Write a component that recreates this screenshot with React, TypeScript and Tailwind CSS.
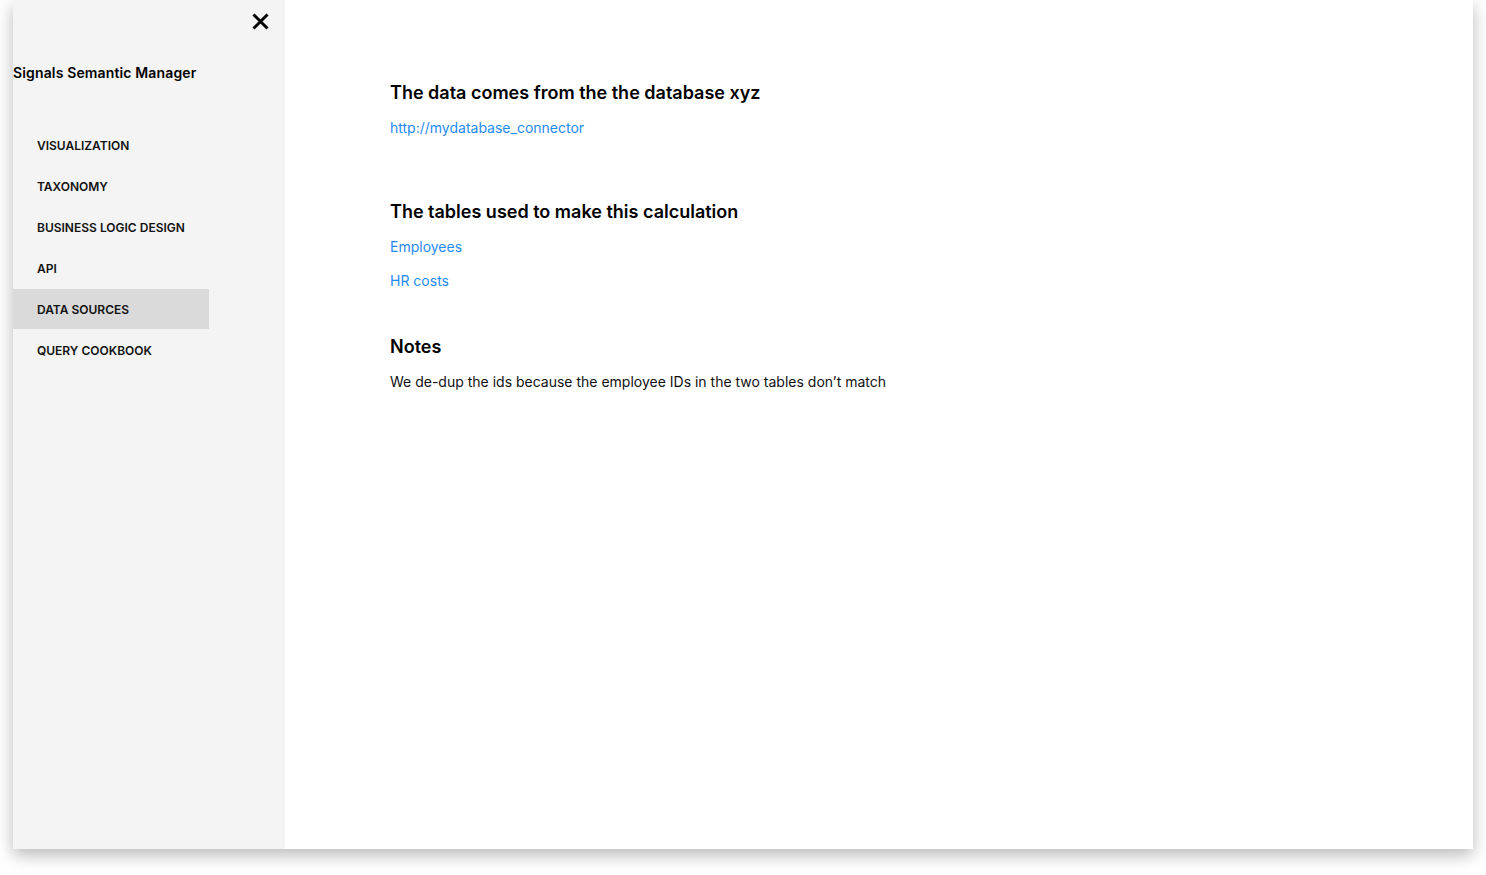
export default function App() {
  const nav = [
    "VISUALIZATION",
    "TAXONOMY",
    "BUSINESS LOGIC DESIGN",
    "API",
    "DATA SOURCES",
    "QUERY COOKBOOK",
  ];
  const active = "DATA SOURCES";

  return (
    <div
      className="w-full h-[875px] bg-white overflow-hidden"
      style={{ fontFamily: "Inter, 'Noto Sans', sans-serif" }}
    >
      <div className="ml-[13px] w-[1460px] h-[849px] flex flex-row bg-white shadow-[0_6px_16px_rgba(0,0,0,0.28)]">
        <aside className="w-[272px] h-full bg-[#f4f4f4] flex flex-col">
          <div className="flex justify-end pt-[12px] pr-[15px]">
            <button className="w-[19px] h-[19px] flex items-center justify-center text-black">
              <svg width="19" height="19" viewBox="0 0 19 19" fill="none">
                <path
                  d="M2.5 2.5L16.5 16.5M16.5 2.5L2.5 16.5"
                  stroke="currentColor"
                  strokeWidth="3"
                  strokeLinecap="butt"
                />
              </svg>
            </button>
          </div>
          <h1 className="mt-[32px] text-[14px] leading-5 font-semibold text-black tracking-[0.01em]">
            Signals Semantic Manager
          </h1>
          <nav className="mt-[42px] flex flex-col gap-px">
            {nav.map((item) => (
              <div
                key={item}
                className={
                  item === active
                    ? "w-[196px] h-10 flex items-center pl-6 pt-px bg-[#dadada]"
                    : "w-[196px] h-10 flex items-center pl-6 pt-px"
                }
              >
                <span className="text-[12px] font-semibold text-[#111]">
                  {item}
                </span>
              </div>
            ))}
          </nav>
        </aside>
        <main className="flex-1 pl-[105px] pt-[79px] text-black">
          <h2 className="text-[18px] leading-7 font-semibold">
            The data comes from the the database xyz
          </h2>
          <a className="block mt-[11px] text-[14px] leading-5 text-[#1f8bf2]">
            http://mydatabase_connector
          </a>
          <h2 className="mt-[60px] text-[18px] leading-7 font-semibold">
            The tables used to make this calculation
          </h2>
          <a className="block mt-[11px] text-[14px] leading-5 text-[#1f8bf2]">
            Employees
          </a>
          <a className="block mt-[14px] text-[14px] leading-5 text-[#1f8bf2]">
            HR costs
          </a>
          <h2 className="mt-[42px] text-[18px] leading-7 font-semibold">
            Notes
          </h2>
          <p className="mt-[11px] text-[14px] leading-5 text-[#111]">
            We de-dup the ids because the employee IDs in the two tables don’t
            match
          </p>
        </main>
      </div>
    </div>
  );
}
